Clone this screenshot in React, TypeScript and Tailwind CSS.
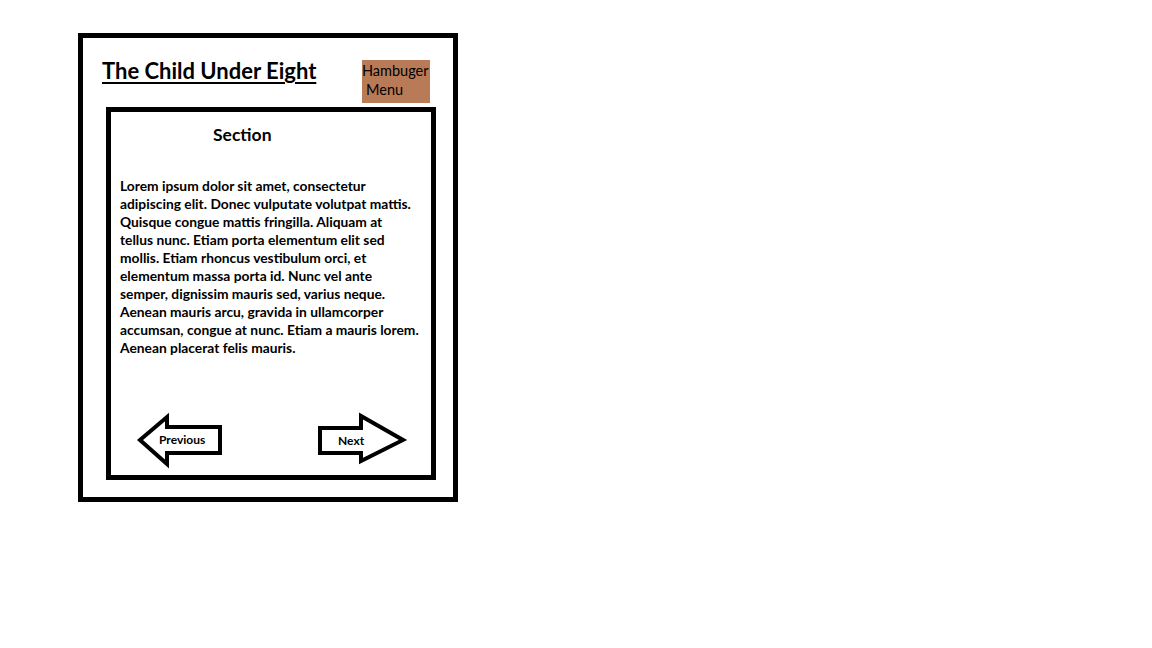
const lines = [
  "Lorem ipsum dolor sit amet, consectetur",
  "adipiscing elit. Donec vulputate volutpat mattis.",
  "Quisque congue mattis fringilla. Aliquam at",
  "tellus nunc. Etiam porta elementum elit sed",
  "mollis. Etiam rhoncus vestibulum orci, et",
  "elementum massa porta id. Nunc vel ante",
  "semper, dignissim mauris sed, varius neque.",
  "Aenean mauris arcu, gravida in ullamcorper",
  "accumsan, congue at nunc. Etiam a mauris lorem.",
  "Aenean placerat felis mauris.",
];

function PrevArrow() {
  return (
    <div className="relative w-[90px] h-[58px]">
      <svg width="90" height="58" viewBox="0 0 90 58" className="absolute inset-0">
        <polygon
          points="5,28 32,5 32,15 85,15 85,41 32,41 32,52"
          fill="white"
          stroke="black"
          strokeWidth="4"
          strokeLinejoin="miter"
        />
      </svg>
      <span className="absolute left-[24px] top-[21px] text-[12px] leading-[14px] font-bold text-black">
        Previous
      </span>
    </div>
  );
}

function NextArrow() {
  return (
    <div className="relative w-[95px] h-[58px]">
      <svg width="95" height="58" viewBox="0 0 95 58" className="absolute inset-0">
        <polygon
          points="5,19 46,19 46,7 88,31 46,52 46,44 5,44"
          fill="white"
          stroke="black"
          strokeWidth="4"
          strokeLinejoin="miter"
        />
      </svg>
      <span className="absolute left-[23px] top-[25px] text-[12px] leading-[14px] font-bold text-black">
        Next
      </span>
    </div>
  );
}

export default function App() {
  return (
    <div
      className="w-[1152px] h-[648px] bg-white overflow-hidden"
      style={{ fontFamily: "Lato, 'Open Sans', sans-serif" }}
    >
      <div className="ml-[78px] mt-[33px] w-[380px] h-[469px] border-[5px] border-black flex flex-col">
        <div className="flex items-start pt-[22px]">
          <h1 className="ml-[19px] mt-[-2px] w-[260px] text-[22px] leading-[26px] font-bold text-black underline decoration-2 underline-offset-[3px]">
            The Child Under Eight
          </h1>
          <div className="w-[68px] h-[43px] bg-[#b97a57] text-[14.5px] leading-[19px] text-black pt-[1px]">
            <div>Hambuger</div>
            <div className="pl-[4px]">Menu</div>
          </div>
        </div>
        <div className="ml-[23px] mt-[4px] w-[330px] h-[373px] border-[5px] border-black flex flex-col">
          <h2 className="pl-[102px] mt-[12px] text-[17.5px] leading-[22px] font-bold text-black">
            Section
          </h2>
          <p className="pl-[9px] mt-[31px] text-[13.8px] leading-[18px] font-bold text-black whitespace-nowrap">
            {lines.map((l, i) => (
              <span key={i} className="block">
                {l}
              </span>
            ))}
          </p>
          <div className="mt-auto mb-[5px] flex items-end pl-[24px]">
            <PrevArrow />
            <div className="ml-[90px] mb-[3px]">
              <NextArrow />
            </div>
          </div>
        </div>
      </div>
    </div>
  );
}
